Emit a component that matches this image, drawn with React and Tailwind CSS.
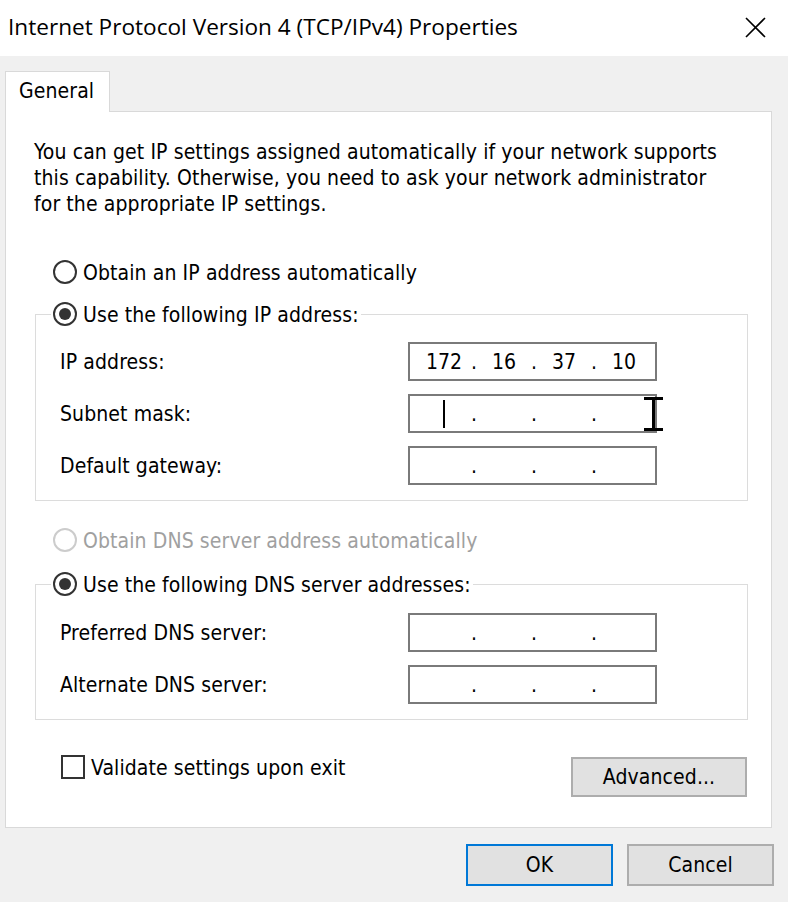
import React from 'react';

const bodyFont = { fontFamily: "'DejaVu Sans Condensed', 'Liberation Sans', sans-serif" };

const Radio = ({ checked, disabled }) => (
  <span
    className={`flex h-[24px] w-[24px] shrink-0 items-center justify-center rounded-full border-2 bg-white ${
      disabled ? 'border-[#cccccc]' : 'border-[#333333]'
    }`}
  >
    {checked && <span className="h-[12px] w-[12px] rounded-full bg-[#333333]" />}
  </span>
);

const RadioLabel = ({ checked, disabled, children }) => (
  <span className={`flex h-[26px] items-center gap-[6px] ${disabled ? 'text-[#a0a0a0]' : 'text-black'}`}>
    <Radio checked={checked} disabled={disabled} />
    <span className="pt-[3px]">{children}</span>
  </span>
);

const IpField = ({ octets = ['', '', '', ''], caret = false, cursor = false }) => (
  <div className="relative flex h-[39px] w-[249px] items-center border-2 border-[#7a7a7a] bg-white pl-[8px] tracking-normal">
    {octets.map((octet, i) => (
      <React.Fragment key={i}>
        {i > 0 && <span className="w-[8px] pt-[3px] text-center">.</span>}
        <span className="flex w-[52px] items-center justify-center pt-[3px]">
          {octet}
          {caret && i === 0 && <span className="-mt-[3px] h-[28px] w-[2px] bg-black" />}
        </span>
      </React.Fragment>
    ))}
    {/* mouse I-beam sitting over the right edge of the field */}
    {cursor && (
      <svg
        className="absolute left-[234px] top-[1px]"
        width="19"
        height="34"
        viewBox="0 0 19 34"
        fill="none"
      >
        <path d="M0 1.5h19M0 32.5h19M9.5 1.5v31" stroke="#000" strokeWidth="3" />
      </svg>
    )}
  </div>
);

const FieldRow = ({ label, ...props }) => (
  <div className="flex h-[39px] items-center pl-[24px]">
    <span className="w-[348px] pt-[3px]">{label}</span>
    <IpField {...props} />
  </div>
);

const GroupBox = ({ legend, className = '', children }) => (
  <fieldset className={`border border-[#dcdcdc] ${className}`}>
    <legend className="ml-[15px] bg-white px-[2px]">{legend}</legend>
    {children}
  </fieldset>
);

const Button = ({ children, primary, className = '' }) => (
  <button
    className={`flex items-center justify-center border-2 bg-[#e1e1e1] pt-[2px] text-black ${
      primary ? 'border-[#0078d7]' : 'border-[#adadad]'
    } ${className}`}
  >
    {children}
  </button>
);

export default function App() {
  return (
    <div
      className="flex h-[902px] w-[788px] flex-col bg-[#f0f0f0] text-[21px] tracking-[0.1px] text-black"
      style={bodyFont}
    >
      {/* title bar */}
      <div className="flex h-[56px] shrink-0 items-center justify-between bg-white pb-[2px] pl-[8px] pr-[22px]">
        <span
          className="text-[22.6px] tracking-normal text-black"
          style={{ fontFamily: "'Open Sans', 'Noto Sans', sans-serif" }}
        >
          Internet Protocol Version 4 (TCP/IPv4) Properties
        </span>
        <svg width="21" height="21" viewBox="0 0 21 21" fill="none">
          <path d="M1 1l19 19M20 1L1 20" stroke="#000" strokeWidth="1.6" />
        </svg>
      </div>

      {/* tab strip */}
      <div className="ml-[5px] mt-[15px] flex">
        <div className="relative z-10 -mb-px flex h-[41px] w-[105px] items-center border border-b-0 border-[#d9d9d9] bg-white pl-[13px]">
          General
        </div>
      </div>

      {/* tab page */}
      <div className="ml-[5px] flex h-[717px] w-[767px] flex-col border border-[#d9d9d9] bg-white pl-[29px] pr-[23px] pt-[27px]">
        <p className="-ml-px leading-[26px]">
          You can get IP settings assigned automatically if your network supports
          <br />
          this capability. Otherwise, you need to ask your network administrator
          <br />
          for the appropriate IP settings.
        </p>

        <div className="ml-[18px] mt-[42px]">
          <RadioLabel>Obtain an IP address automatically</RadioLabel>
        </div>

        <GroupBox className="mt-[16px]" legend={<RadioLabel checked>Use the following IP address:</RadioLabel>}>
          <div className="flex flex-col gap-[13px] pb-[15px] pt-[15px]">
            <FieldRow label="IP address:" octets={['172', '16', '37', '10']} />
            <FieldRow label="Subnet mask:" caret cursor />
            <FieldRow label="Default gateway:" />
          </div>
        </GroupBox>

        <div className="ml-[18px] mt-[26px]">
          <RadioLabel disabled>Obtain DNS server address automatically</RadioLabel>
        </div>

        <GroupBox className="mt-[18px]" legend={<RadioLabel checked>Use the following DNS server addresses:</RadioLabel>}>
          <div className="flex flex-col gap-[13px] pb-[15px] pt-[16px]">
            <FieldRow label="Preferred DNS server:" />
            <FieldRow label="Alternate DNS server:" />
          </div>
        </GroupBox>

        <div className="mt-[35px] flex items-start justify-between pr-px">
          <label className="ml-[26px] flex h-[24px] items-center gap-[6px]">
            <span className="h-[24px] w-[24px] shrink-0 border-2 border-[#333333] bg-white" />
            <span className="pt-[3px]">Validate settings upon exit</span>
          </label>
          <Button className="mt-[2px] h-[40px] w-[176px]">Advanced...</Button>
        </div>
      </div>

      {/* dialog buttons */}
      <div className="mt-[16px] flex justify-end gap-[14px] pr-[14px]">
        <Button primary className="h-[42px] w-[147px]">
          OK
        </Button>
        <Button className="h-[42px] w-[147px]">Cancel</Button>
      </div>
    </div>
  );
}
